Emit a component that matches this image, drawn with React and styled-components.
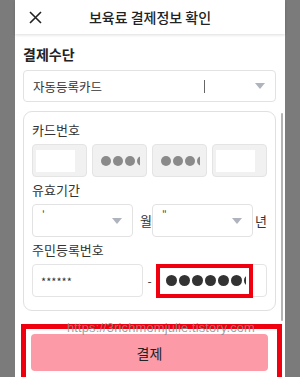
import React from "react";
import styled, { createGlobalStyle } from "styled-components";

const Global = createGlobalStyle`
  body {
    margin: 0;
    font-family: "Noto Sans CJK KR", "Noto Sans", sans-serif;
  }
`;

const Page = styled.div`
  width: 300px;
  height: 377px;
  background: #7b7b7b;
  display: flex;
  justify-content: center;
  overflow: hidden;
  position: relative;
`;

const Modal = styled.div`
  width: 270px;
  height: 377px;
  background: #fff;
  position: relative;
  display: flex;
  flex-direction: column;
`;

const Header = styled.div`
  height: 34px;
  flex: none;
  display: grid;
  grid-template-columns: 40px 1fr 40px;
  align-items: center;
  box-shadow: 0 1px 3px rgba(0, 0, 0, 0.14);
  position: relative;
  z-index: 1;
`;

const Close = styled.button`
  border: 0;
  background: none;
  padding: 0 0 0 14px;
  display: flex;
  align-items: center;
`;

const Title = styled.h1`
  margin: 0;
  font-size: 14px;
  font-weight: 500;
  text-align: center;
  color: #222;
`;

const Body = styled.div`
  padding: 10px 9px 0 8px;
  display: flex;
  flex-direction: column;
`;

const Heading = styled.div`
  font-size: 14px;
  font-weight: 700;
  color: #222;
  line-height: 20px;
  margin-bottom: 6px;
`;

const Select = styled.div`
  height: ${(p) => p.$h || 32}px;
  border: 1px solid #e2e2e2;
  border-radius: 4px;
  box-sizing: border-box;
  display: flex;
  align-items: ${(p) => (p.$top ? "flex-start" : "center")};
  padding: 0 10px 0 9px;
  font-size: 12.5px;
  color: #333;
  position: relative;
`;

const SelectText = styled.span`
  flex: 1;
`;

const Caret = styled.span`
  width: 1px;
  height: 13px;
  background: #666;
  margin-right: 50px;
`;

const Arrow = styled.span`
  width: 0;
  height: 0;
  border-left: 5px solid transparent;
  border-right: 5px solid transparent;
  border-top: 6px solid #aeb3bd;
  position: ${(p) => (p.$abs ? "absolute" : "static")};
  right: 10px;
  top: 13px;
`;

const Card = styled.div`
  margin-top: 9px;
  border: 1px solid #e0e0e0;
  border-radius: 9px;
  padding: 9px 8px 13px 8px;
  display: flex;
  flex-direction: column;
`;

const Label = styled.div`
  font-size: 13px;
  color: #333;
  line-height: 18px;
  margin: ${(p) => (p.$first ? "0" : "4px")} 0 5px 0;
`;

const CardRow = styled.div`
  display: grid;
  grid-template-columns: repeat(4, 55px);
  gap: 5px;
`;

const NumBox = styled.div`
  height: 33px;
  background: #f1f1f1;
  border: 1px solid #e4e4e4;
  border-radius: 4px;
  box-sizing: border-box;
  display: flex;
  align-items: center;
  padding-left: ${(p) => (p.$pad ? 8 : 3)}px;
`;

const Redact = styled.div`
  width: 39px;
  height: 22px;
  background: #fff;
`;

const DotClip = styled.div`
  width: ${(p) => p.$w}px;
  overflow: hidden;
  display: flex;
  gap: 2px;
`;

const Dot = styled.span`
  flex: none;
  width: ${(p) => p.$s}px;
  height: ${(p) => p.$s}px;
  border-radius: 50%;
  background: ${(p) => p.$c};
`;

const DateRow = styled.div`
  display: grid;
  grid-template-columns: 101px 19px 101px 14px;
  align-items: center;
`;

const Unit = styled.span`
  font-size: 13px;
  color: #333;
  text-align: right;
`;

const Tick = styled.span`
  font-size: 10px;
  color: #444;
  line-height: 14px;
  padding-top: 2px;
`;

const IdRow = styled.div`
  display: grid;
  grid-template-columns: 111px 13px 111px;
  align-items: center;
`;

const Input = styled.div`
  height: 33px;
  border: 1px solid #e4e4e4;
  border-radius: 4px;
  box-sizing: border-box;
  display: flex;
  align-items: center;
  padding-left: ${(p) => p.$pl}px;
  font-size: 11px;
  color: #333;
  position: relative;
`;

const Dash = styled.span`
  font-size: 12px;
  color: #333;
  text-align: center;
`;

const Highlight = styled.div`
  position: absolute;
  left: -1px;
  top: -1px;
  width: 97px;
  height: 34px;
  border: 4px solid #f0000f;
  box-sizing: border-box;
  pointer-events: none;
`;

const PayButton = styled.button`
  margin: 23px 8px 0 8px;
  height: 37px;
  border: 0;
  border-radius: 4px;
  background: #fc9aa8;
  font-family: inherit;
  font-size: 14px;
  color: #222;
`;

const ButtonFrame = styled.div`
  position: absolute;
  left: 6px;
  top: 324px;
  width: 261px;
  height: 60px;
  border: 5px solid #f0000f;
  box-sizing: border-box;
  pointer-events: none;
`;

const Watermark = styled.div`
  position: absolute;
  left: 52px;
  top: 320px;
  font-family: "Liberation Sans", sans-serif;
  font-size: 13px;
  letter-spacing: 0.1px;
  color: rgba(140, 140, 140, 0.85);
  pointer-events: none;
  z-index: 2;
`;

const Scrollbar = styled.div`
  position: absolute;
  left: 266px;
  top: 113px;
  width: 2px;
  height: 208px;
  background: #b4b4b4;
  border-radius: 1px;
`;

const Dots = ({ n, s, c, w }) => (
  <DotClip $w={w}>
    {Array.from({ length: n }).map((_, i) => (
      <Dot key={i} $s={s} $c={c} />
    ))}
  </DotClip>
);

export default function App() {
  return (
    <Page>
      <Global />
      <Modal>
        <Header>
          <Close>
            <svg width="13" height="13" viewBox="0 0 13 13">
              <path d="M1 1 L12 12 M12 1 L1 12" stroke="#222" strokeWidth="1.6" />
            </svg>
          </Close>
          <Title>보육료 결제정보 확인</Title>
          <span />
        </Header>
        <Body>
          <Heading>결제수단</Heading>
          <Select>
            <SelectText>자동등록카드</SelectText>
            <Caret />
            <Arrow />
          </Select>
          <Card>
            <Label $first>카드번호</Label>
            <CardRow>
              <NumBox>
                <Redact />
              </NumBox>
              <NumBox $pad>
                <Dots n={4} s={10} c="#8a8a8a" w={39} />
              </NumBox>
              <NumBox $pad>
                <Dots n={4} s={10} c="#8a8a8a" w={39} />
              </NumBox>
              <NumBox>
                <Redact />
              </NumBox>
            </CardRow>
            <Label>유효기간</Label>
            <DateRow>
              <Select $h={33} $top>
                <Tick>'</Tick>
                <Arrow $abs />
              </Select>
              <Unit>월</Unit>
              <Select $h={33} $top>
                <Tick>"</Tick>
                <Arrow $abs />
              </Select>
              <Unit>년</Unit>
            </DateRow>
            <Label>주민등록번호</Label>
            <IdRow>
              <Input $pl={8}>******</Input>
              <Dash>-</Dash>
              <Input $pl={9}>
                <Dots n={7} s={11} c="#333" w={80} />
                <Highlight />
              </Input>
            </IdRow>
          </Card>
          <PayButton>결제</PayButton>
        </Body>
        <Scrollbar />
        <Watermark>https://3richmomjulie.tistory.com</Watermark>
        <ButtonFrame />
      </Modal>
    </Page>
  );
}
